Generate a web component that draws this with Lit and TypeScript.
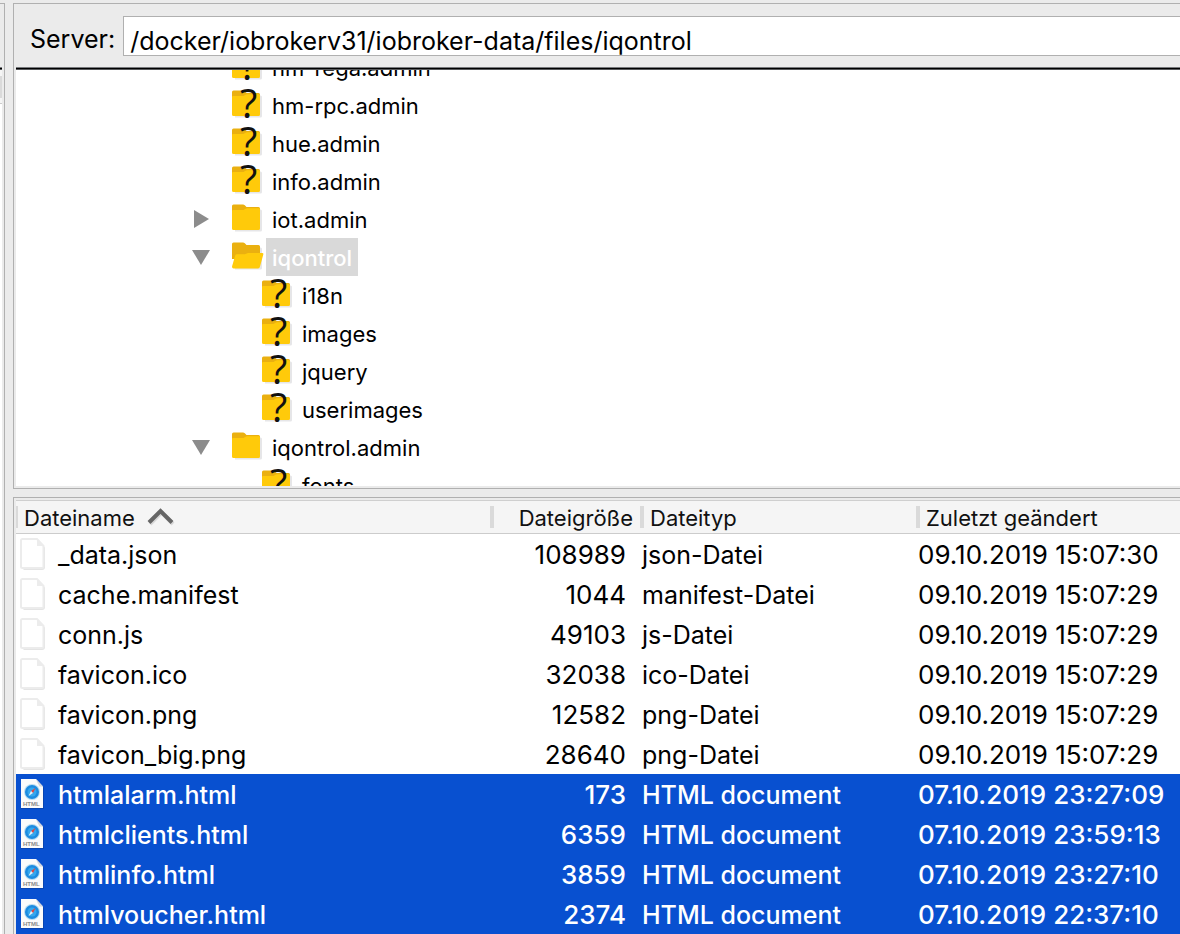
import { LitElement, html, svg, css, nothing } from "lit";
import { customElement, property, state } from "lit/decorators.js";
import { classMap } from "lit/directives/class-map.js";

type FolderKind = "unknown" | "closed" | "open";

interface TreeNode {
  name: string;
  kind: FolderKind;
  expanded?: boolean;
  expandable?: boolean;
  selected?: boolean;
  children?: TreeNode[];
}

interface FileRow {
  name: string;
  size: string;
  type: string;
  modified: string;
  selected?: boolean;
}

const TREE: TreeNode[] = [
  { name: "hm-rega.admin", kind: "unknown" },
  { name: "hm-rpc.admin", kind: "unknown" },
  { name: "hue.admin", kind: "unknown" },
  { name: "info.admin", kind: "unknown" },
  { name: "iot.admin", kind: "closed", expandable: true },
  {
    name: "iqontrol",
    kind: "open",
    expandable: true,
    expanded: true,
    selected: true,
    children: [
      { name: "i18n", kind: "unknown" },
      { name: "images", kind: "unknown" },
      { name: "jquery", kind: "unknown" },
      { name: "userimages", kind: "unknown" },
    ],
  },
  {
    name: "iqontrol.admin",
    kind: "closed",
    expandable: true,
    expanded: true,
    children: [{ name: "fonts", kind: "unknown" }],
  },
];

const FILES: FileRow[] = [
  { name: "_data.json", size: "108989", type: "json-Datei", modified: "09.10.2019 15:07:30" },
  { name: "cache.manifest", size: "1044", type: "manifest-Datei", modified: "09.10.2019 15:07:29" },
  { name: "conn.js", size: "49103", type: "js-Datei", modified: "09.10.2019 15:07:29" },
  { name: "favicon.ico", size: "32038", type: "ico-Datei", modified: "09.10.2019 15:07:29" },
  { name: "favicon.png", size: "12582", type: "png-Datei", modified: "09.10.2019 15:07:29" },
  { name: "favicon_big.png", size: "28640", type: "png-Datei", modified: "09.10.2019 15:07:29" },
  { name: "htmlalarm.html", size: "173", type: "HTML document", modified: "07.10.2019 23:27:09", selected: true },
  { name: "htmlclients.html", size: "6359", type: "HTML document", modified: "07.10.2019 23:59:13", selected: true },
  { name: "htmlinfo.html", size: "3859", type: "HTML document", modified: "07.10.2019 23:27:10", selected: true },
  { name: "htmlvoucher.html", size: "2374", type: "HTML document", modified: "07.10.2019 22:37:10", selected: true },
];

@customElement("folder-icon")
export class FolderIcon extends LitElement {
  @property() kind: FolderKind = "closed";

  static styles = css`
    :host {
      display: block;
      width: 34px;
      height: 38px;
    }
    .icon {
      display: block;
    }
    .mark {
      font-family: "Open Sans", "Noto Sans", sans-serif;
      font-size: 40px;
      font-weight: 500;
    }
  `;

  render() {
    return html`<svg class="icon" width="34" height="38" viewBox="0 -1 34 38" aria-hidden="true">
      <path d="M2 8.5h26.5q1.5 0 1.5 1.500v19q0 1.500-1.500 1.500H3z" fill="#e6e6e8" />
      <path d="M0 5q0-1.500 1.500-1.500H11q1 0 1.800.8L14.500 6H26.500Q28 6 28 7.500V20H0z" fill="#eab010" />
      ${this.kind === "open"
        ? svg`<path d="M3.200 16.500q.4-1.200 1.600-1.200h8L16 14h14.200q1.500 0 1.100 1.400L28 27.500q-.4 2-2 2H1.500q-1.500 0-1.500-2z" fill="#ffcb0b" />`
        : svg`<path d="M0 10q0-1 1-1h9.500q1 0 1.800-.5l1.200-.8q.7-.4 1.500-.4H27q1 0 1 1V27.500q0 1.500-1.500 1.500h-25Q0 29 0 27.500z" fill="#ffca0a" />`}
      ${this.kind === "unknown"
        ? svg`<text class="mark" x="8" y="31" fill="#111">?</text>`
        : nothing}
    </svg>`;
  }
}

@customElement("file-icon")
export class FileIcon extends LitElement {
  @property({ type: Boolean }) web = false;

  static styles = css`
    :host {
      display: block;
      width: 28px;
      height: 36px;
    }
    .icon {
      display: block;
    }
    .tag {
      font-family: "Liberation Sans", sans-serif;
      font-size: 6px;
      font-weight: 700;
    }
  `;

  render() {
    return this.web
      ? html`<svg class="icon" width="28" height="36" viewBox="0 1 28 36" aria-hidden="true">
          <path d="M1 4h16l7 8v21H1z" fill="#06358f" opacity=".45" />
          <path d="M1 3h15l7 7.500V32H1z" fill="#fbfbfb" />
          <path d="M16 3l7 7.500h-3.500Q18 8 16 3z" fill="#d4d7dc" />
          <circle cx="12" cy="16" r="8" fill="#b9dcf2" />
          <circle cx="12" cy="16" r="7" fill="#1c8be0" />
          <circle cx="12" cy="16" r="4.500" fill="#35a7ee" />
          <path d="M15.500 12L11 15l2 2z" fill="#e8413a" />
          <path d="M8.500 20L11 15l2 2z" fill="#e6f2fa" />
          <text class="tag" x="3" y="30" fill="#8a8a8a">HTML</text>
        </svg>`
      : html`<svg class="icon" width="28" height="36" viewBox="0 1 28 36" aria-hidden="true">
          <path d="M2 5q0-1 1-1h14.500l7.500 7.500V31q0 3-3 3H4L2 32z" fill="#e4e4e4" />
          <path d="M1 4.500Q1 3 2.500 3H17l6.500 7V30.500q0 1.500-1.500 1.500H2.500Q1 32 1 30.500z" fill="#fff" stroke="#ececec" stroke-width="2" />
          <path d="M17 3.500V10h6.500z" fill="#ececec" />
        </svg>`;
  }
}

@customElement("remote-tree")
export class RemoteTree extends LitElement {
  @state() private nodes = TREE;

  static styles = css`
    :host {
      display: block;
      overflow: hidden;
      background: #fff;
    }
    .tree,
    .branch {
      list-style: none;
      margin: 0;
      padding: 0;
    }
    .tree {
      margin-top: -22px;
      padding-left: 174px;
    }
    .branch {
      padding-left: 30px;
    }
    .row {
      display: flex;
      align-items: center;
      height: 38px;
    }
    .toggle,
    .spacer {
      flex: none;
      width: 22px;
      height: 38px;
      margin-right: 20px;
    }
    .toggle {
      padding: 0;
      border: 0;
      background: none;
    }
    .arrow {
      display: block;
    }
    .label {
      height: 38px;
      padding: 0 6px;
      font-size: 22px;
      line-height: 41px;
      white-space: nowrap;
    }
    .label.selected {
      background: #d9d9d9;
      color: #fff;
      font-weight: 500;
    }
  `;

  private toggle(node: TreeNode) {
    node.expanded = !node.expanded;
    this.nodes = [...this.nodes];
  }

  private renderNode(node: TreeNode): unknown {
    return html`<li role="treeitem" aria-selected=${node.selected ? "true" : "false"}>
      <div class="row">
        ${node.expandable
          ? html`<button class="toggle" aria-label=${node.name} @click=${() => this.toggle(node)}>
              <svg class="arrow" width="22" height="38" viewBox="0 -1 22 38" aria-hidden="true">
                ${node.expanded
                  ? svg`<path d="M2 11h18L11 26z" fill="#8c8c8c" />`
                  : svg`<path d="M4 9v18l15-9z" fill="#8c8c8c" />`}
              </svg>
            </button>`
          : html`<span class="spacer"></span>`}
        <folder-icon .kind=${node.kind}></folder-icon>
        <span class=${classMap({ label: true, selected: !!node.selected })}>${node.name}</span>
      </div>
      ${node.expanded && node.children
        ? html`<ul class="branch" role="group">${node.children.map((c) => this.renderNode(c))}</ul>`
        : nothing}
    </li>`;
  }

  render() {
    return html`<ul class="tree" role="tree">${this.nodes.map((n) => this.renderNode(n))}</ul>`;
  }
}

@customElement("file-table")
export class FileTable extends LitElement {
  static styles = css`
    :host {
      display: block;
      overflow: hidden;
      background: #fff;
    }
    .files {
      width: 100%;
      table-layout: fixed;
      border-collapse: separate;
      border-spacing: 0;
    }
    .col-name {
      width: 476px;
    }
    .col-size {
      width: 150px;
    }
    .col-type {
      width: 276px;
    }
    .head {
      height: 32px;
      padding: 0;
      border-top: 1px solid #cfcfcf;
      border-bottom: 1px solid #cccccc;
      background-color: #f5f5f5;
      background-image: linear-gradient(#dadada, #dadada), linear-gradient(#dadada, #dadada);
      background-size: 2px 22px;
      background-repeat: no-repeat;
      background-position: left center, right center;
      font-weight: 400;
      text-align: left;
    }
    .head:last-child {
      background-position: left center;
    }
    .sort {
      display: flex;
      align-items: center;
      gap: 12px;
      width: 100%;
      height: 32px;
      padding: 2px 9px 0 8px;
      border: 0;
      background: none;
      color: #111;
      font: inherit;
      font-size: 22px;
      line-height: 30px;
      white-space: nowrap;
    }
    .sort.end {
      justify-content: flex-end;
    }
    .cell {
      height: 38px;
      padding: 2px 0 0;
      font-size: 25px;
      line-height: 38px;
      white-space: nowrap;
    }
    .cell.num {
      font-size: 26px;
    }
    .cell.end {
      padding-right: 16px;
      text-align: right;
    }
    .name {
      display: flex;
      align-items: center;
      gap: 10px;
      padding-left: 4px;
    }
    .selected .cell {
      background: #0850d0;
      color: #fff;
      font-weight: 500;
    }
  `;

  render() {
    return html`<table class="files">
      <colgroup>
        <col class="col-name" />
        <col class="col-size" />
        <col class="col-type" />
        <col />
      </colgroup>
      <thead>
        <tr>
          <th class="head" scope="col" aria-sort="ascending">
            <button class="sort">
              Dateiname
              <svg width="28" height="20" viewBox="0 0 28 20" aria-hidden="true">
                <path d="M3 16L14.500 4.500L26 16" fill="none" stroke="#d8d8d8" stroke-width="4" />
                <path d="M2 14.500L13.500 3L25 14.500" fill="none" stroke="#666" stroke-width="4" />
              </svg>
            </button>
          </th>
          <th class="head" scope="col"><button class="sort end">Dateigröße</button></th>
          <th class="head" scope="col"><button class="sort">Dateityp</button></th>
          <th class="head" scope="col"><button class="sort">Zuletzt geändert</button></th>
        </tr>
      </thead>
      <tbody>
        ${FILES.map(
          (f) => html`<tr class=${classMap({ selected: !!f.selected })}>
            <td class="cell">
              <div class="name"><file-icon ?web=${!!f.selected}></file-icon><span>${f.name}</span></div>
            </td>
            <td class="cell num end">${f.size}</td>
            <td class="cell">${f.type}</td>
            <td class="cell num">${f.modified}</td>
          </tr>`
        )}
      </tbody>
    </table>`;
  }
}

@customElement("app-root")
export class AppRoot extends LitElement {
  static styles = css`
    :host {
      display: grid;
      grid-template-columns: 5px minmax(0, 1fr);
      column-gap: 8px;
      box-sizing: border-box;
      height: 100vh;
      padding-top: 3px;
      overflow: hidden;
      background: #ebebeb;
      color: #000;
      font-family: Inter, "Liberation Sans", sans-serif;
    }
    .local {
      display: flex;
      flex-direction: column;
      border-top: 1px solid #b0b0b0;
      border-right: 1px solid #b0b0b0;
      padding: 63px 2px 0 0;
    }
    .divider {
      flex: none;
      height: 1px;
      border-top: 1px solid #77797c;
      border-bottom: 1px solid #55575a;
      background: #000;
    }
    .local-head {
      height: 33px;
      border-bottom: 1px solid #ccc;
      background: linear-gradient(#f5f5f5 6px, #dadada 6px, #dadada 28px, #f5f5f5 28px);
    }
    .local-list {
      flex: 1;
      background: #fff;
    }
    .remote {
      display: flex;
      flex-direction: column;
      gap: 8px;
      min-width: 0;
    }
    .pane {
      display: flex;
      flex-direction: column;
      box-sizing: border-box;
      min-height: 0;
      border: 1px solid #b0b0b0;
      border-right: 0;
    }
    .pane.top {
      flex: none;
      height: round(52vh, 1px);
      padding: 0 0 2px 2px;
    }
    .pane.bottom {
      flex: 1;
      padding: 2px 0 0 2px;
      border-bottom: 0;
    }
    .address {
      display: flex;
      align-items: center;
      flex: none;
      gap: 8px;
      padding: 12px 0 11px 14px;
    }
    .address-label {
      padding-top: 6px;
      font-size: 25px;
      line-height: 34px;
    }
    .address-input {
      flex: 1;
      box-sizing: border-box;
      min-width: 0;
      height: 40px;
      margin: 0;
      padding: 10px 6px 0;
      border: 1px solid #b0b0b0;
      border-right: 0;
      border-radius: 0;
      outline: 0;
      background: #fff;
      color: #000;
      font: inherit;
      font-size: 25px;
    }
    .remote-tree {
      flex: 1;
      min-height: 0;
    }
    .file-table {
      flex: 1;
      min-height: 0;
    }
  `;

  render() {
    return html`
      <aside class="local">
        <div class="divider"></div>
        <div class="local-head"></div>
        <div class="local-list"></div>
      </aside>
      <main class="remote">
        <section class="pane top">
          <div class="address">
            <label class="address-label" for="path">Server:</label>
            <input
              class="address-input"
              id="path"
              type="text"
              .value=${"/docker/iobrokerv31/iobroker-data/files/iqontrol"}
            />
          </div>
          <div class="divider"></div>
          <remote-tree class="remote-tree"></remote-tree>
        </section>
        <section class="pane bottom">
          <file-table class="file-table"></file-table>
        </section>
      </main>
    `;
  }
}
